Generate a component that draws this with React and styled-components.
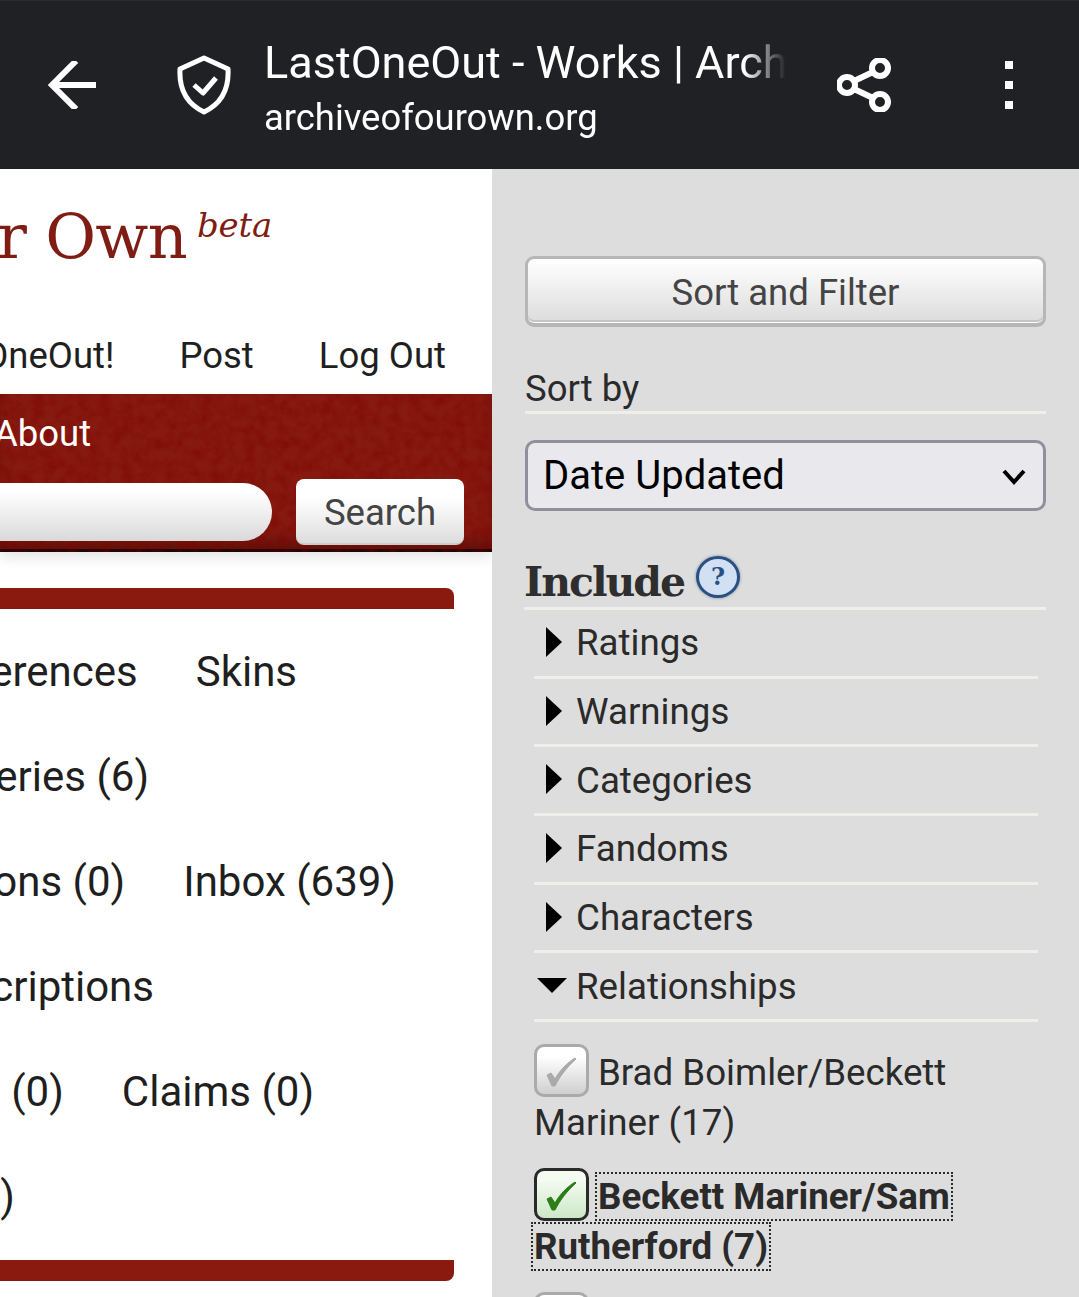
import React from "react";
import styled, { createGlobalStyle } from "styled-components";

const filterGroups = ["Ratings", "Warnings", "Categories", "Fandoms", "Characters"];

function CheckMark() {
	return (
		<svg width="31" height="30" viewBox="12 13 31 30" fill="currentColor" stroke="currentColor" strokeWidth="1">
			<path d="M13 31 L17 29 L21 35 C26 26 33 19 41 14 L42 15 C33 23 26 32 21 42 L18 42 Z" />
		</svg>
	);
}

export default function App() {
	return (
		<Page>
			<GlobalStyle />
			<TopBar>
				<BackSlot>
					<svg width="50" height="48" viewBox="0 0 50 48" fill="none" stroke="#fff" strokeWidth="6">
						<path d="M27 2 L5 24 L27 46" strokeLinecap="square" />
						<path d="M5 24 H49" />
					</svg>
				</BackSlot>
				<ShieldSlot>
					<svg width="54" height="60" viewBox="0 0 54 60" fill="none" stroke="#fff" strokeWidth="5" strokeLinejoin="round" strokeLinecap="round">
						<path d="M27 3 L51 14 C52 32 46 48 27 57 C8 48 2 32 3 14 Z" />
						<path d="M17 30 L26 38 L39 23" strokeLinecap="butt" />
					</svg>
				</ShieldSlot>
				<TitleBlock>
					<PageTitle>LastOneOut - Works | Archive of Our Own</PageTitle>
					<PageHost>archiveofourown.org</PageHost>
				</TitleBlock>
				<ShareSlot>
					<svg width="54" height="54" viewBox="0 0 54 54" fill="none" stroke="#fff" strokeWidth="6">
						<circle cx="43" cy="10" r="8" />
						<circle cx="10" cy="27" r="8" />
						<circle cx="43" cy="44" r="8" />
						<path d="M17 23 L36 14 M17 31 L36 40" />
					</svg>
				</ShareSlot>
				<MenuDots>
					<Dot />
					<Dot />
					<Dot />
				</MenuDots>
			</TopBar>
			<Columns>
				<Main>
					<Masthead>
						<Logo>
							Archive of Our Own<Beta>beta</Beta>
						</Logo>
					</Masthead>
					<UserNav>
						<span>Hi, LastOneOut!</span>
						<span>Post</span>
						<span>Log Out</span>
					</UserNav>
					<RedBar>
						<Texture width="492" height="158">
							<filter id="mottle">
								<feTurbulence type="fractalNoise" baseFrequency="0.09" numOctaves="3" seed="4" />
								<feColorMatrix values="0 0 0 0 0.2  0 0 0 0 0  0 0 0 0 0  0.9 0 0 0 -0.28" />
							</filter>
							<rect width="492" height="158" filter="url(#mottle)" />
						</Texture>
						<AboutRow>About</AboutRow>
						<SearchRow>
							<SearchInput />
							<SearchButton>Search</SearchButton>
						</SearchRow>
					</RedBar>
					<Strip $top />
					<DashList>
						<DashRow $end={195}>
							<span>Preferences</span>
							<span>Skins</span>
						</DashRow>
						<DashRow $end={343}>
							<span>Series (6)</span>
						</DashRow>
						<DashRow $end={96}>
							<span>Collections (0)</span>
							<span>Inbox (639)</span>
						</DashRow>
						<DashRow $end={338}>
							<span>Subscriptions</span>
						</DashRow>
						<DashRow $end={178}>
							<span>Sign-ups (0)</span>
							<span>Claims (0)</span>
						</DashRow>
						<DashRow $end={477}>
							<span>Gifts (0)</span>
						</DashRow>
					</DashList>
					<Strip />
				</Main>
				<Sidebar>
					<FilterButton>Sort and Filter</FilterButton>
					<SortLabel>Sort by</SortLabel>
					<SortSelect>
						<span>Date Updated</span>
						<svg width="24" height="16" viewBox="0 0 24 16" fill="none" stroke="#000" strokeWidth="4">
							<path d="M2 2 L12 13 L22 2" />
						</svg>
					</SortSelect>
					<IncludeHeading>
						Include<HelpBadge>?</HelpBadge>
					</IncludeHeading>
					<GroupList>
						{filterGroups.map((name) => (
							<GroupRow key={name}>
								<ClosedArrow />
								{name}
							</GroupRow>
						))}
						<GroupRow>
							<OpenArrow />
							Relationships
						</GroupRow>
					</GroupList>
					<TagList>
						<TagItem>
							<CheckBox>
								<CheckMark />
							</CheckBox>
							Brad Boimler/Beckett Mariner (17)
						</TagItem>
						<TagItem>
							<CheckBox $checked>
								<CheckMark />
							</CheckBox>
							<FocusedLabel>Beckett Mariner/Sam Rutherford (7)</FocusedLabel>
						</TagItem>
						<TagItem>
							<CheckBox>
								<CheckMark />
							</CheckBox>
							Beckett Mariner/D'Vana Tendi (5)
						</TagItem>
					</TagList>
				</Sidebar>
			</Columns>
		</Page>
	);
}

const GlobalStyle = createGlobalStyle`
	html, body {
		margin: 0;
		padding: 0;
		height: 100%;
		overflow: hidden;
		background: #dddddd;
	}
	body {
		font-family: Roboto, "Liberation Sans", sans-serif;
	}
`;

const Page = styled.div`
	display: flex;
	flex-direction: column;
	height: 1297px;
	width: 1079px;
	overflow: hidden;
`;

const TopBar = styled.div`
	align-items: center;
	background-color: #202125;
	border-top: 1px solid #2b2c30;
	box-sizing: border-box;
	color: #fff;
	display: flex;
	flex: none;
	height: 169px;
`;

const BackSlot = styled.div`
	display: flex;
	flex: none;
	margin-left: 47px;
	width: 130px;
`;

const ShieldSlot = styled.div`
	display: flex;
	flex: none;
	width: 87px;
`;

const TitleBlock = styled.div`
	display: flex;
	flex: none;
	flex-direction: column;
	gap: 7px;
	margin-top: 4px;
	overflow: hidden;
	white-space: nowrap;
	width: 522px;
	-webkit-mask-image: linear-gradient(to right, #000 480px, transparent 522px);
	mask-image: linear-gradient(to right, #000 480px, transparent 522px);
`;

const PageTitle = styled.div`
	font-size: 45px;
	line-height: 54px;
`;

const PageHost = styled.div`
	font-size: 36.4px;
	line-height: 42px;
`;

const ShareSlot = styled.div`
	display: flex;
	flex: none;
	margin-left: 51px;
	width: 168px;
`;

const MenuDots = styled.div`
	display: flex;
	flex: none;
	flex-direction: column;
	gap: 12px;
`;

const Dot = styled.div`
	background: #fff;
	height: 8px;
	width: 8px;
`;

const Columns = styled.div`
	display: flex;
	flex: 1;
	min-height: 0;
`;

const Main = styled.div`
	background: #fff;
	color: #1f1f1f;
	display: flex;
	flex: none;
	flex-direction: column;
	overflow: hidden;
	width: 492px;
`;

const Masthead = styled.div`
	display: flex;
	flex: none;
	height: 151px;
	justify-content: flex-end;
	padding-right: 220px;
`;

const Logo = styled.div`
	color: #7f1d14;
	flex: none;
	font-family: "DejaVu Serif", "Liberation Serif", serif;
	font-size: 62px;
	letter-spacing: -0.7px;
	line-height: 135px;
	white-space: nowrap;
`;

const Beta = styled.i`
	font-size: 34px;
	letter-spacing: -0.2px;
	margin-left: 10px;
	position: relative;
	top: -21px;
`;

const UserNav = styled.div`
	display: flex;
	flex: none;
	font-size: 36.5px;
	gap: 65px;
	height: 74px;
	justify-content: flex-end;
	line-height: 72px;
	padding-right: 46px;
	white-space: nowrap;
`;

const RedBar = styled.div`
	background-color: #861a10;
	border-bottom: 3px solid #1c0504;
	box-shadow: 0 6px 12px rgba(0, 0, 0, 0.1), inset 0 -14px 18px -8px rgba(50, 5, 0, 0.55);
	box-sizing: border-box;
	display: flex;
	flex: none;
	flex-direction: column;
	height: 158px;
	overflow: visible;
	position: relative;
`;

const Texture = styled.svg`
	left: 0;
	position: absolute;
	top: 0;
`;

const AboutRow = styled.div`
	color: #fff;
	font-size: 36.5px;
	height: 85px;
	line-height: 80px;
	margin-left: -6px;
	position: relative;
`;

const SearchRow = styled.div`
	align-items: center;
	display: flex;
	gap: 24px;
	justify-content: flex-end;
	padding-right: 28px;
	position: relative;
`;

const SearchInput = styled.div`
	background: linear-gradient(#fff 15%, #d9d9d9);
	border-radius: 0 29px 29px 0;
	height: 58px;
	width: 272px;
`;

const SearchButton = styled.div`
	background: linear-gradient(#fff 30%, #ddd);
	border-bottom: 2px solid #ccc;
	border-radius: 8px;
	box-sizing: border-box;
	color: #444;
	font-size: 36.5px;
	height: 66px;
	line-height: 68px;
	text-align: center;
	width: 168px;
`;

const Strip = styled.div`
	background: #8a1a10;
	border-radius: ${(p) => (p.$top ? "0 8px 0 0" : "0 0 8px 0")};
	flex: none;
	height: 21px;
	margin-right: 38px;
	margin-top: ${(p) => (p.$top ? "36px" : "0")};
`;

const DashList = styled.div`
	display: flex;
	flex: none;
	flex-direction: column;
	padding: 10px 0 11px;
`;

const DashRow = styled.div`
	align-items: center;
	display: flex;
	flex: none;
	font-size: 42px;
	gap: 58px;
	height: 105px;
	justify-content: flex-end;
	padding-right: ${(p) => p.$end}px;
	white-space: nowrap;
`;

const Sidebar = styled.div`
	background: #dddddd;
	box-sizing: border-box;
	color: #2a2a2a;
	display: flex;
	flex: 1;
	flex-direction: column;
	overflow: hidden;
	padding: 87px 33px 0;
`;

const FilterButton = styled.div`
	background: linear-gradient(#fff, #dcdcdc);
	border: 3px solid #b6b6b6;
	border-bottom-width: 4px;
	border-radius: 9px;
	box-shadow: inset 0 -1px 0 #fff, inset 0 -3px 0 #c4c4c4;
	box-sizing: border-box;
	color: #444;
	flex: none;
	font-size: 36.5px;
	height: 71px;
	line-height: 67px;
	text-align: center;
`;

const SortLabel = styled.div`
	border-bottom: 3px solid #f0eeea;
	flex: none;
	font-size: 36.5px;
	height: 54px;
	line-height: 64px;
	margin-top: 30px;
`;

const SortSelect = styled.div`
	align-items: center;
	background: #e9e9ed;
	border: 3px solid #8f8f9d;
	border-radius: 10px;
	box-sizing: border-box;
	color: #000;
	display: flex;
	flex: none;
	font-size: 40px;
	height: 71px;
	justify-content: space-between;
	margin-top: 26px;
	padding: 0 17px 0 15px;
	svg {
		margin-top: 3px;
	}
`;

const IncludeHeading = styled.div`
	align-items: flex-start;
	border-bottom: 3px solid #f0eeea;
	color: #2e2e2e;
	display: flex;
	flex: none;
	font-family: "DejaVu Serif", "Liberation Serif", serif;
	font-size: 41px;
	font-weight: 700;
	gap: 12px;
	height: 61px;
	letter-spacing: -2px;
	line-height: 72px;
	margin-left: -1px;
	margin-top: 35px;
`;

const HelpBadge = styled.span`
	background: #d1e1f3;
	border: 3px solid #2a5082;
	border-radius: 50%;
	box-shadow: 0 0 3px rgba(42, 80, 130, 0.6);
	box-sizing: border-box;
	color: #2a5082;
	font-size: 24px;
	height: 42px;
	letter-spacing: 0;
	line-height: 36px;
	margin-top: 10px;
	text-align: center;
	width: 44px;
`;

const GroupList = styled.div`
	display: flex;
	flex: none;
	flex-direction: column;
	margin: 0 8px 0 9px;
`;

const GroupRow = styled.div`
	align-items: center;
	border-bottom: 3px solid #f0eeea;
	box-sizing: border-box;
	display: flex;
	flex: none;
	font-size: 36.7px;
	height: 68.67px;
	padding-left: 42px;
	position: relative;
`;

const ClosedArrow = styled.span`
	border-bottom: 15px solid transparent;
	border-left: 16px solid #000;
	border-top: 15px solid transparent;
	left: 12px;
	position: absolute;
	top: 17px;
`;

const OpenArrow = styled.span`
	border-left: 15px solid transparent;
	border-right: 15px solid transparent;
	border-top: 15px solid #000;
	left: 3px;
	position: absolute;
	top: 25px;
`;

const TagList = styled.div`
	display: flex;
	flex-direction: column;
	flex: none;
	font-size: 36.7px;
	gap: 24px;
	line-height: 50px;
	margin: 26px 8px 0 9px;
`;

const TagItem = styled.div`
	flex: none;
`;

const CheckBox = styled.span`
	align-items: center;
	background: ${(p) => (p.$checked ? "linear-gradient(#f4fbf1 20%, #cde7c6)" : "linear-gradient(#fff 20%, #cfcfcf)")};
	border: 3px solid ${(p) => (p.$checked ? "#2a2a2a" : "#aaaaaa")};
	border-radius: 10px;
	box-sizing: border-box;
	color: ${(p) => (p.$checked ? "#2f7d1a" : "#aaaaaa")};
	display: inline-flex;
	height: 53px;
	justify-content: center;
	margin: -11px 9px -1px 0;
	padding-top: 3px;
	vertical-align: middle;
	width: 55px;
`;

const FocusedLabel = styled.span`
	font-weight: 700;
	outline: 2px dotted #2a2a2a;
	outline-offset: 1px;
`;
